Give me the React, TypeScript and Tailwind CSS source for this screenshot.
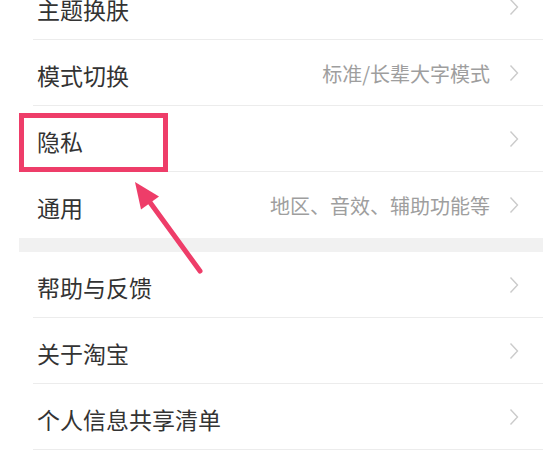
import React from 'react';

interface SettingItem {
  label: string;
  hint?: string;
}

const groupOne: SettingItem[] = [
  { label: '主题换肤' },
  { label: '模式切换', hint: '标准/长辈大字模式' },
  { label: '隐私' },
  { label: '通用', hint: '地区、音效、辅助功能等' },
];

const groupTwo: SettingItem[] = [
  { label: '帮助与反馈' },
  { label: '关于淘宝' },
  { label: '个人信息共享清单' },
];

const Chevron = () => (
  <svg width="10" height="18" viewBox="0 0 10 18" className="shrink-0">
    <path d="M1.5 1.5 L8.5 9 L1.5 16.5" fill="none" stroke="#cbcbcb" strokeWidth="1.4" />
  </svg>
);

const Row = ({ item, last }: { item: SettingItem; last: boolean }) => (
  <div
    className={`ml-[33px] h-[66px] flex items-center pl-[4px] pr-[24px] ${
      last ? '' : 'border-b border-[#ececec]'
    }`}
  >
    <span className="flex-1 pt-[5px] text-[23px] leading-none text-[#333333]">{item.label}</span>
    {item.hint && (
      <span className="mr-[19px] pt-[2px] text-[20px] leading-none text-[#9e9e9e]">{item.hint}</span>
    )}
    <Chevron />
  </div>
);

const App: React.FC = () => {
  return (
    <div
      className="relative h-[457px] w-full overflow-hidden bg-white"
      style={{ fontFamily: '"Noto Sans CJK SC", "Noto Sans", sans-serif' }}
    >
      <div className="-mt-[26px]">
        {groupOne.map((item, i) => (
          <Row key={item.label} item={item} last={i === groupOne.length - 1} />
        ))}
        <div className="ml-[19px] h-[14px] bg-[#f1f1f1]" />
        {groupTwo.map((item) => (
          <Row key={item.label} item={item} last={false} />
        ))}
      </div>

      {/* highlight box */}
      <div className="absolute left-[19px] top-[113px] h-[59px] w-[149px] border-[5px] border-[#ee3d69]" />

      {/* arrow */}
      <svg className="absolute left-0 top-0" width="543" height="457" viewBox="0 0 543 457">
        <line x1="200" y1="271" x2="149" y2="201" stroke="#ee3d69" strokeWidth="5" strokeLinecap="round" />
        <polygon points="135,182 159,196.5 141,209.5" fill="#ee3d69" />
      </svg>
    </div>
  );
};

export default App;
